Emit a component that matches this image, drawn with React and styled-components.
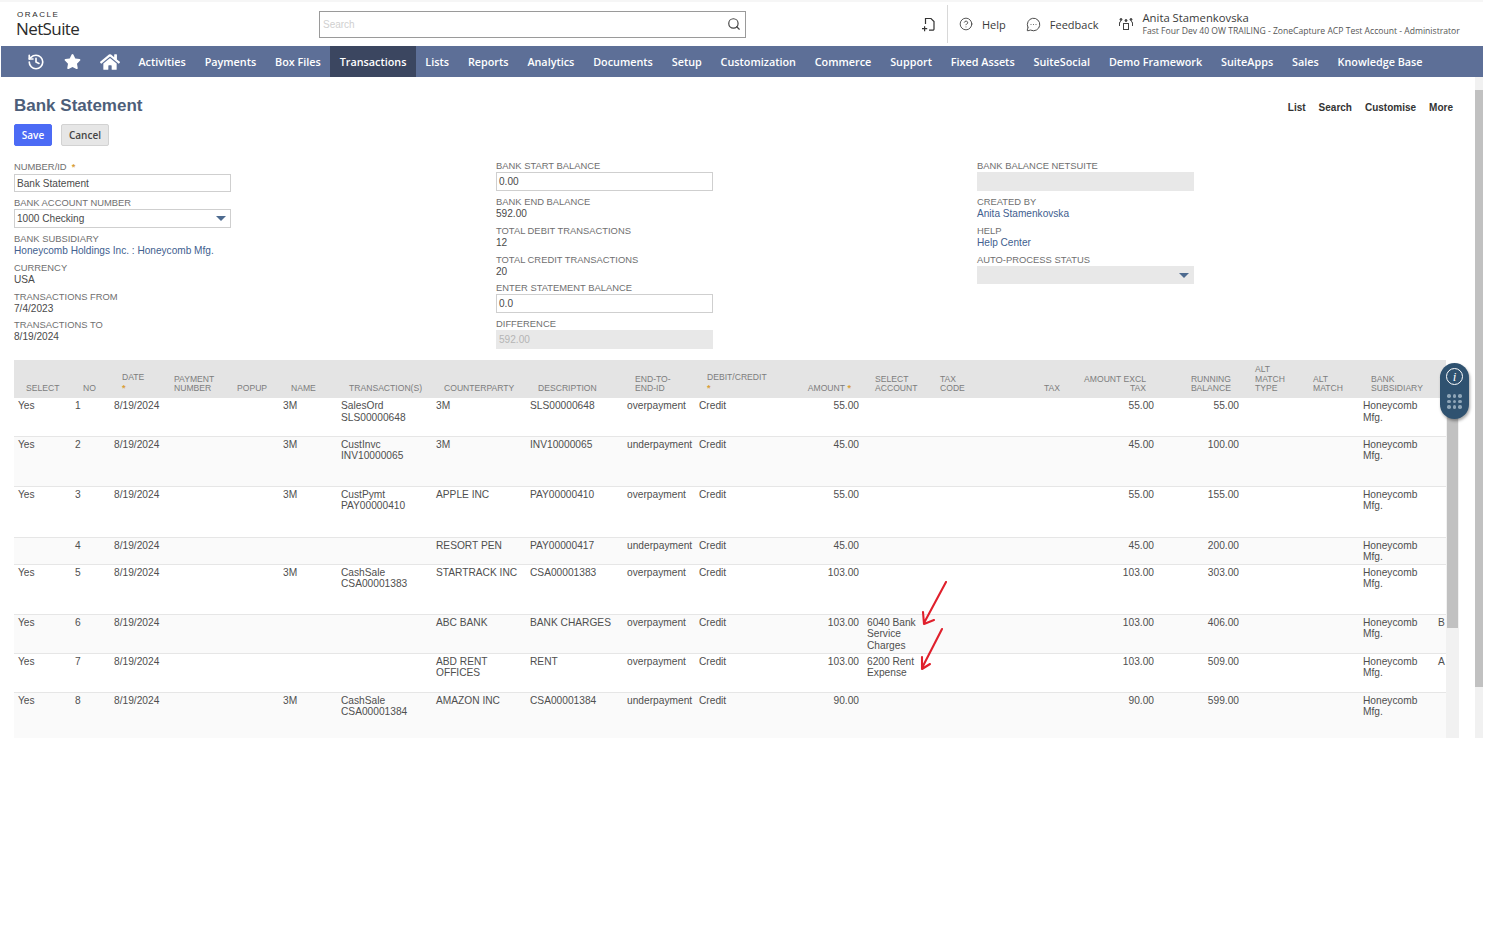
import React from "react";
import styled, { createGlobalStyle } from "styled-components";
import { History, Search, CircleHelp, MessageCircleMore } from "lucide-react";
import { FaHome, FaStar } from "react-icons/fa";

const navItems = [
  "Activities", "Payments", "Box Files", "Transactions", "Lists", "Reports", "Analytics",
  "Documents", "Setup", "Customization", "Commerce", "Support", "Fixed Assets", "SuiteSocial",
  "Demo Framework", "SuiteApps", "Sales", "Knowledge Base",
];

const columns = [
  { w: 57, title: "SELECT" },
  { w: 39, title: "NO" },
  { w: 52, title: "DATE", req: "below" },
  { w: 63, title: "PAYMENT\nNUMBER" },
  { w: 54, title: "POPUP" },
  { w: 58, title: "NAME" },
  { w: 95, title: "TRANSACTION(S)" },
  { w: 94, title: "COUNTERPARTY" },
  { w: 97, title: "DESCRIPTION" },
  { w: 72, title: "END-TO-\nEND-ID" },
  { w: 95, title: "DEBIT/CREDIT", req: "below" },
  { w: 73, title: "AMOUNT", req: "inline", right: true },
  { w: 65, title: "SELECT\nACCOUNT" },
  { w: 72, title: "TAX\nCODE" },
  { w: 72, title: "TAX", right: true },
  { w: 86, title: "AMOUNT EXCL\nTAX", right: true },
  { w: 85, title: "RUNNING\nBALANCE", right: true },
  { w: 58, title: "ALT\nMATCH\nTYPE" },
  { w: 58, title: "ALT\nMATCH" },
  { w: 75, title: "BANK\nSUBSIDIARY" },
  { w: 12, title: "" },
];

const rows = [
  { h: 38, c: ["Yes", "1", "8/19/2024", "", "", "3M", "SalesOrd\nSLS00000648", "3M", "SLS00000648", "overpayment", "Credit", "55.00", "", "", "", "55.00", "55.00", "", "", "Honeycomb Mfg.", ""] },
  { h: 50, c: ["Yes", "2", "8/19/2024", "", "", "3M", "CustInvc\nINV10000065", "3M", "INV10000065", "underpayment", "Credit", "45.00", "", "", "", "45.00", "100.00", "", "", "Honeycomb Mfg.", ""] },
  { h: 51, c: ["Yes", "3", "8/19/2024", "", "", "3M", "CustPymt\nPAY00000410", "APPLE INC", "PAY00000410", "overpayment", "Credit", "55.00", "", "", "", "55.00", "155.00", "", "", "Honeycomb Mfg.", ""] },
  { h: 27, c: ["", "4", "8/19/2024", "", "", "", "", "RESORT PEN", "PAY00000417", "underpayment", "Credit", "45.00", "", "", "", "45.00", "200.00", "", "", "Honeycomb Mfg.", ""] },
  { h: 50, c: ["Yes", "5", "8/19/2024", "", "", "3M", "CashSale\nCSA00001383", "STARTRACK INC", "CSA00001383", "overpayment", "Credit", "103.00", "", "", "", "103.00", "303.00", "", "", "Honeycomb Mfg.", ""] },
  { h: 39, c: ["Yes", "6", "8/19/2024", "", "", "", "", "ABC BANK", "BANK CHARGES", "overpayment", "Credit", "103.00", "6040 Bank\nService\nCharges", "", "", "103.00", "406.00", "", "", "Honeycomb Mfg.", "B"] },
  { h: 39, c: ["Yes", "7", "8/19/2024", "", "", "", "", "ABD RENT\nOFFICES", "RENT", "overpayment", "Credit", "103.00", "6200 Rent\nExpense", "", "", "103.00", "509.00", "", "", "Honeycomb Mfg.", "A"] },
  { h: 46, c: ["Yes", "8", "8/19/2024", "", "", "3M", "CashSale\nCSA00001384", "AMAZON INC", "CSA00001384", "underpayment", "Credit", "90.00", "", "", "", "90.00", "599.00", "", "", "Honeycomb Mfg.", ""] },
];

const App = () => {
  return (
    <Page>
      <GlobalStyle />
      <TopBar>
        <Logo>
          <span className="oracle">ORACLE</span>
          <span className="suite">NetSuite</span>
        </Logo>
        <SearchBox>
          <span>Search</span>
          <Search size={14} color="#444" strokeWidth={2} />
        </SearchBox>
        <TopActions>
          <NewRecord>
            <svg width="15" height="15" viewBox="0 0 15 15" fill="none" stroke="#333" strokeWidth="1.2">
              <path d="M4.5 7V1.5h5.5l3 3v7.5a1.2 1.2 0 0 1-1.2 1.2H8" />
              <path d="M3.6 9.2v5M1 11.7h5.2" />
            </svg>
          </NewRecord>
          <TopLink>
            <CircleHelp size={14} strokeWidth={1.4} color="#333" />
            <span>Help</span>
          </TopLink>
          <TopLink>
            <MessageCircleMore size={15} strokeWidth={1.4} color="#333" />
            <span>Feedback</span>
          </TopLink>
          <RoleBlock>
            <svg width="16" height="16" viewBox="0 0 16 16" fill="none" stroke="#444" strokeWidth="1">
              <rect x="5.5" y="7.5" width="5" height="6" />
              <circle cx="8" cy="4.5" r="1" fill="#444" />
              <circle cx="3" cy="3.5" r="1" fill="#444" />
              <circle cx="13" cy="3.5" r="1" fill="#444" />
              <path d="M1.5 10V7a1.5 1.5 0 0 1 1.5-1.5M14.5 10V7A1.5 1.5 0 0 0 13 5.5" />
            </svg>
            <div>
              <RoleName>Anita Stamenkovska</RoleName>
              <RoleSub>Fast Four Dev 40 OW TRAILING - ZoneCapture ACP Test Account - Administrator</RoleSub>
            </div>
          </RoleBlock>
        </TopActions>
      </TopBar>

      <Nav>
        <NavIcons>
          <History size={18} color="#fff" strokeWidth={2.2} />
          <FaStar size={17} color="#fff" />
          <FaHome size={20} color="#fff" />
        </NavIcons>
        {navItems.map((item) => (
          <NavItem key={item} $active={item === "Transactions"}>
            {item}
          </NavItem>
        ))}
      </Nav>

      <Main>
        <Content>
          <TitleRow>
            <Title>Bank Statement</Title>
            <PageLinks>
              <span>List</span>
              <span>Search</span>
              <span>Customise</span>
              <span>More</span>
            </PageLinks>
          </TitleRow>
          <Buttons>
            <Button $primary>Save</Button>
            <Button>Cancel</Button>
          </Buttons>

          <FormGrid>
            <FormColumn $offset={1}>
              <Field>
                <Label>
                  NUMBER/ID &nbsp;<Req>*</Req>
                </Label>
                <Input $short>Bank Statement</Input>
              </Field>
              <Field>
                <Label>BANK ACCOUNT NUMBER</Label>
                <Input>
                  1000 Checking
                  <Caret />
                </Input>
              </Field>
              <Field>
                <Label>BANK SUBSIDIARY</Label>
                <Value $link>Honeycomb Holdings Inc. : Honeycomb Mfg.</Value>
              </Field>
              <Field>
                <Label>CURRENCY</Label>
                <Value>USA</Value>
              </Field>
              <Field>
                <Label>TRANSACTIONS FROM</Label>
                <Value>7/4/2023</Value>
              </Field>
              <Field>
                <Label>TRANSACTIONS TO</Label>
                <Value>8/19/2024</Value>
              </Field>
            </FormColumn>

            <FormColumn>
              <Field>
                <Label>BANK START BALANCE</Label>
                <Input>0.00</Input>
              </Field>
              <Field>
                <Label>BANK END BALANCE</Label>
                <Value>592.00</Value>
              </Field>
              <Field>
                <Label>TOTAL DEBIT TRANSACTIONS</Label>
                <Value>12</Value>
              </Field>
              <Field>
                <Label>TOTAL CREDIT TRANSACTIONS</Label>
                <Value>20</Value>
              </Field>
              <Field>
                <Label>ENTER STATEMENT BALANCE</Label>
                <Input>0.0</Input>
              </Field>
              <Field>
                <Label>DIFFERENCE</Label>
                <Input $disabled>592.00</Input>
              </Field>
            </FormColumn>

            <FormColumn>
              <Field>
                <Label>BANK BALANCE NETSUITE</Label>
                <Input $disabled />
              </Field>
              <Field>
                <Label>CREATED BY</Label>
                <Value $link>Anita Stamenkovska</Value>
              </Field>
              <Field>
                <Label>HELP</Label>
                <Value $link>Help Center</Value>
              </Field>
              <Field>
                <Label>AUTO-PROCESS STATUS</Label>
                <Input $disabled $short>
                  <Caret />
                </Input>
              </Field>
            </FormColumn>
          </FormGrid>

          <TableArea>
            <Table>
              <colgroup>
                {columns.map((col, i) => (
                  <col key={i} width={col.w} />
                ))}
              </colgroup>
              <thead>
                <tr>
                  {columns.map((col, i) => (
                    <Th key={i} $right={col.right}>
                      {col.title}
                      {col.req === "inline" && <Req> *</Req>}
                      {col.req === "below" && <BelowReq>*</BelowReq>}
                    </Th>
                  ))}
                </tr>
              </thead>
              <tbody>
                {rows.map((row, r) => (
                  <Row key={r} $h={row.h} $alt={r % 2 === 1}>
                    {row.c.map((cell, i) => (
                      <Td key={i} $right={columns[i].right}>
                        {cell}
                      </Td>
                    ))}
                  </Row>
                ))}
              </tbody>
            </Table>
            <TableScroll>
              <div />
            </TableScroll>

            <Arrows width="40" height="100" viewBox="0 0 40 100" fill="none" stroke="#e0202c" strokeWidth="2.1" strokeLinecap="round" strokeLinejoin="round">
              <path d="M27 1 L5 42 M4 31 L5 43 L15 39" />
              <path d="M23 48 L3 87 M3 76 L3 88 L11 83" />
            </Arrows>

            <Widget>
              <span className="info">i</span>
              <Dots>
                {Array.from({ length: 9 }).map((_, i) => (
                  <i key={i} />
                ))}
              </Dots>
            </Widget>
          </TableArea>
        </Content>
        <PageScroll>
          <div />
        </PageScroll>
      </Main>
    </Page>
  );
};

const GlobalStyle = createGlobalStyle`
  html, body {
    margin: 0;
    padding: 0;
    background: #fff;
  }
`;

const Page = styled.div`
  width: 1483px;
  font-family: "Liberation Sans", Arial, sans-serif;
  color: #4a4a4a;
`;

const TopBar = styled.header`
  display: flex;
  align-items: center;
  height: 42px;
  padding-top: 1px;
  margin-bottom: 1px;
  border-top: 2px solid #f6f6f6;
`;

const Logo = styled.div`
  display: flex;
  flex-direction: column;
  width: 319px;
  padding-left: 16px;
  box-sizing: border-box;
  color: #2b2b2b;

  .oracle {
    font-size: 8px;
    line-height: 9px;
    letter-spacing: 1.6px;
    padding-left: 1px;
  }
  .suite {
    font-family: "Open Sans", sans-serif;
    font-size: 17px;
    line-height: 19px;
    letter-spacing: -0.6px;
  }
`;

const SearchBox = styled.div`
  display: flex;
  align-items: center;
  justify-content: space-between;
  width: 427px;
  height: 27px;
  padding: 0 4px 0 3px;
  border: 1px solid #9a9a9a;
  box-sizing: border-box;
  font-size: 10px;
  color: #d0d0d0;
`;

const TopActions = styled.div`
  display: flex;
  align-items: center;
  height: 38px;
  margin-left: 175px;
  font-family: "Open Sans", sans-serif;
`;

const NewRecord = styled.div`
  display: flex;
  align-items: center;
  height: 38px;
  padding-right: 11px;
  margin-right: -1px;
  border-right: 1px solid #d8d8d8;
`;

const TopLink = styled.div`
  display: flex;
  align-items: center;
  gap: 9px;
  margin-left: 12px;
  margin-right: 8px;
  font-size: 11px;
  color: #3a3a3a;
`;

const RoleBlock = styled.div`
  display: flex;
  align-items: center;
  gap: 8px;
  margin-left: 12px;
`;

const RoleName = styled.div`
  font-size: 11.3px;
  line-height: 14px;
  color: #3a3a3a;
`;

const RoleSub = styled.div`
  font-size: 8.6px;
  line-height: 12px;
  color: #555;
  white-space: nowrap;
`;

const Nav = styled.nav`
  display: flex;
  align-items: stretch;
  height: 31px;
  margin-left: 1px;
  background: #5d6f97;
  font-family: "Open Sans", sans-serif;
`;

const NavIcons = styled.div`
  display: flex;
  align-items: center;
  gap: 19px;
  width: 128px;
  padding-left: 26px;
  box-sizing: border-box;
`;

const NavItem = styled.div`
  display: flex;
  align-items: center;
  padding: 0 9.45px;
  font-size: 10.8px;
  font-weight: 600;
  color: #fff;
  background: ${(p) => (p.$active ? "#3b4660" : "transparent")};
`;

const Main = styled.main`
  display: flex;
  height: 661px;
`;

const Content = styled.div`
  width: 1459px;
  padding: 19px 0 0 14px;
  box-sizing: border-box;
`;

const TitleRow = styled.div`
  display: flex;
  align-items: center;
  justify-content: space-between;
  height: 20px;
  padding-right: 6px;
`;

const Title = styled.h1`
  margin: 0;
  font-size: 17px;
  font-weight: 700;
  color: #4d5e79;
`;

const PageLinks = styled.div`
  display: flex;
  gap: 13px;
  margin-top: 2px;
  font-size: 10px;
  font-weight: 700;
  color: #333;
`;

const Buttons = styled.div`
  display: flex;
  gap: 9px;
  margin-top: 8px;
  font-family: "Open Sans", sans-serif;
`;

const Button = styled.div`
  display: flex;
  align-items: center;
  justify-content: center;
  width: ${(p) => (p.$primary ? "38px" : "48px")};
  height: 22px;
  border-radius: 2px;
  box-sizing: border-box;
  font-size: 10px;
  font-weight: 600;
  color: ${(p) => (p.$primary ? "#fff" : "#444")};
  background: ${(p) => (p.$primary ? "#4c6bf5" : "#e6e6e6")};
  border: 1px solid ${(p) => (p.$primary ? "#4c6bf5" : "#d2d2d2")};
`;

const FormGrid = styled.div`
  display: grid;
  grid-template-columns: 482px 481px 1fr;
  height: 200px;
  margin-top: 14px;
`;

const FormColumn = styled.div`
  display: flex;
  flex-direction: column;
  gap: 5px;
  padding-top: ${(p) => p.$offset || 0}px;
`;

const Field = styled.div`
  display: flex;
  flex-direction: column;
  gap: 1px;
`;

const Label = styled.label`
  font-size: 9.4px;
  line-height: 11px;
  color: #6f6f6f;
`;

const Req = styled.span`
  color: #d8a03a;
  font-size: 9px;
  font-weight: 700;
`;

const BelowReq = styled(Req)`
  display: block;
  padding-top: 2px;
`;

const Value = styled.div`
  font-size: 10.1px;
  line-height: 11.8px;
  color: ${(p) => (p.$link ? "#41608f" : "#4a4a4a")};
`;

const Input = styled.div`
  position: relative;
  display: flex;
  align-items: center;
  width: 217px;
  height: ${(p) => (p.$short ? "18px" : "19px")};
  padding-left: 2px;
  box-sizing: border-box;
  font-size: 10.1px;
  color: ${(p) => (p.$disabled ? "#b5b5b5" : "#4a4a4a")};
  background: ${(p) => (p.$disabled ? "#e8e8e8" : "#fff")};
  border: 1px solid ${(p) => (p.$disabled ? "#e8e8e8" : "#cfcfcf")};
`;

const Caret = styled.span`
  position: absolute;
  right: 4px;
  top: 6px;
  width: 0;
  height: 0;
  border-left: 5px solid transparent;
  border-right: 5px solid transparent;
  border-top: 5px solid #4d6a8f;
`;

const TableArea = styled.div`
  position: relative;
  display: flex;
  height: 378px;
`;

const Table = styled.table`
  width: 1432px;
  height: max-content;
  table-layout: fixed;
  border-collapse: collapse;
  flex: none;
`;

const Th = styled.th`
  height: 38px;
  padding: 0 12px 5px;
  box-sizing: border-box;
  vertical-align: bottom;
  text-align: ${(p) => (p.$right ? "right" : "left")};
  white-space: pre-line;
  font-size: 8.6px;
  line-height: 9.2px;
  font-weight: 400;
  color: #7d7d7d;
  background: #e4e4e4;
`;

const Row = styled.tr`
  height: ${(p) => p.$h}px;
  background: ${(p) => (p.$alt ? "#fafafa" : "#fff")};
  border-bottom: 1px solid #e6e6e6;

  &:last-child {
    border-bottom: none;
  }
`;

const Td = styled.td`
  padding: 2px 4px 0;
  vertical-align: top;
  text-align: ${(p) => (p.$right ? "right" : "left")};
  white-space: pre-line;
  font-size: 10.2px;
  line-height: 11.7px;
  color: #4f4f4f;
`;

const TableScroll = styled.div`
  width: 13px;
  margin-top: 38px;
  background: #f1f1f1;

  div {
    width: 11px;
    height: 230px;
    margin-left: 1px;
    background: #c1c1c1;
  }
`;

const Arrows = styled.svg`
  position: absolute;
  left: 905px;
  top: 221px;
`;

const Widget = styled.div`
  position: absolute;
  left: 1426px;
  top: 3px;
  display: flex;
  flex-direction: column;
  align-items: center;
  width: 29px;
  height: 56px;
  padding-top: 5px;
  box-sizing: border-box;
  border-radius: 15px;
  background: #2f5270;
  box-shadow: 1px 2px 3px rgba(0, 0, 0, 0.35);

  .info {
    display: flex;
    align-items: center;
    justify-content: center;
    width: 17px;
    height: 17px;
    box-sizing: border-box;
    border: 1px solid #fff;
    border-radius: 50%;
    font-family: "Liberation Serif", serif;
    font-style: italic;
    font-size: 13px;
    color: #fff;
  }
`;

const Dots = styled.div`
  display: grid;
  grid-template-columns: repeat(3, 3.5px);
  gap: 2px;
  margin-top: 9px;

  i {
    width: 3.5px;
    height: 3.5px;
    border-radius: 50%;
    background: #8fa6b8;
  }
`;

const PageScroll = styled.div`
  width: 8px;
  margin-left: 16px;
  background: #f1f1f1;

  div {
    height: 597px;
    margin-top: 13px;
    background: #c1c1c1;
  }
`;

export default App;
